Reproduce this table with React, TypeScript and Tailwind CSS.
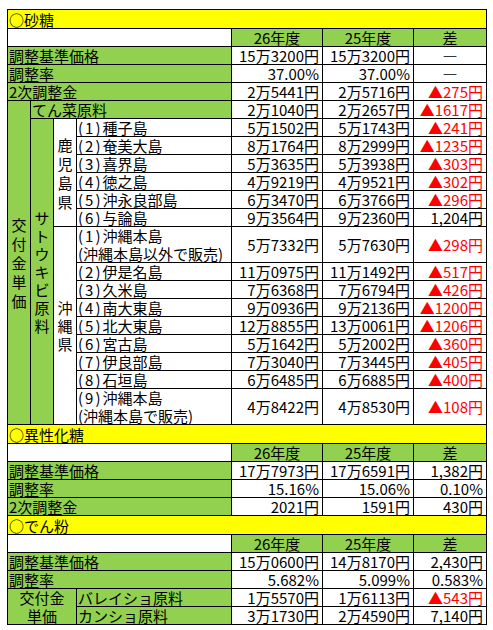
import React from "react";

// 砂糖・異性化糖・でん粉の調整金/交付金単価の比較表（Excel風）

const GREEN = "bg-[#92d050]";
const YELLOW = "bg-[#ffff00]";

type Row = { name: string; y26: string; y25: string; diff: string; red?: boolean };

const kagoshima: Row[] = [
  { name: "(1)種子島", y26: "5万1502円", y25: "5万1743円", diff: "▲241円", red: true },
  { name: "(2)奄美大島", y26: "8万1764円", y25: "8万2999円", diff: "▲1235円", red: true },
  { name: "(3)喜界島", y26: "5万3635円", y25: "5万3938円", diff: "▲303円", red: true },
  { name: "(4)徳之島", y26: "4万9219円", y25: "4万9521円", diff: "▲302円", red: true },
  { name: "(5)沖永良部島", y26: "6万3470円", y25: "6万3766円", diff: "▲296円", red: true },
  { name: "(6)与論島", y26: "9万3564円", y25: "9万2360円", diff: "1,204円" },
];

const okinawa: Row[] = [
  { name: "(2)伊是名島", y26: "11万0975円", y25: "11万1492円", diff: "▲517円", red: true },
  { name: "(3)久米島", y26: "7万6368円", y25: "7万6794円", diff: "▲426円", red: true },
  { name: "(4)南大東島", y26: "9万0936円", y25: "9万2136円", diff: "▲1200円", red: true },
  { name: "(5)北大東島", y26: "12万8855円", y25: "13万0061円", diff: "▲1206円", red: true },
  { name: "(6)宮古島", y26: "5万1642円", y25: "5万2002円", diff: "▲360円", red: true },
  { name: "(7)伊良部島", y26: "7万3040円", y25: "7万3445円", diff: "▲405円", red: true },
  { name: "(8)石垣島", y26: "6万6485円", y25: "6万6885円", diff: "▲400円", red: true },
];

const Title = ({ children }: { children: React.ReactNode }) => (
  <div className={`col-span-7 ${YELLOW} flex items-center pl-px`}>{children}</div>
);

const HeaderRow = () => (
  <>
    <div className="col-span-4 bg-white" />
    <div className={`${GREEN} flex items-center justify-center`}>26年度</div>
    <div className={`${GREEN} flex items-center justify-center`}>25年度</div>
    <div className={`${GREEN} flex items-center justify-center`}>差</div>
  </>
);

const Label = ({ children, span = "col-span-4" }: { children: React.ReactNode; span?: string }) => (
  <div className={`${span} ${GREEN} flex items-center whitespace-nowrap pl-px`}>{children}</div>
);

// "(1)種子島" -> 番号部分だけ字間を広げる
const Island = ({ text }: { text: string }) => {
  const m = text.match(/^(\(\d\))(.*)$/);
  if (!m) return <span>{text}</span>;
  return (
    <span>
      <span className="tracking-[2px]">{m[1]}</span>
      {m[2]}
    </span>
  );
};

const Name = ({ children }: { children: React.ReactNode }) => (
  <div className="flex flex-col justify-center whitespace-nowrap bg-white pl-px leading-[18px]">
    {children}
  </div>
);

const Num = ({ children, red }: { children: React.ReactNode; red?: boolean }) => (
  <div
    className={`flex items-center justify-end whitespace-nowrap bg-white pr-[3px] ${
      red ? "text-[#ff0000]" : ""
    }`}
  >
    {children}
  </div>
);

const Dash = () => <div className="flex items-center justify-center bg-white">―</div>;

const VText = ({ text, lh }: { text: string; lh: string }) => (
  <div className="flex flex-col items-center">
    {[...text].map((c, i) => (
      <span key={i} className={lh}>
        {c}
      </span>
    ))}
  </div>
);

const Values = ({ r }: { r: Row }) => (
  <>
    <Num>{r.y26}</Num>
    <Num>{r.y25}</Num>
    <Num red={r.red}>{r.diff}</Num>
  </>
);

export default function App() {
  return (
    <div className="min-h-screen bg-white font-['Noto_Sans_CJK_JP','Noto_Sans',sans-serif] text-[15px] leading-[17px] text-black">
      <div className="ml-[7px] mt-[9px] grid w-fit grid-cols-[22px_22px_22px_154px_90px_90px_72px] grid-rows-[18px_repeat(11,17px)_35px_repeat(7,17px)_35px_18px_repeat(4,17px)_18px_repeat(5,17px)] gap-px bg-black p-px">
        {/* 砂糖 */}
        <Title>○砂糖</Title>
        <HeaderRow />
        <Label>調整基準価格</Label>
        <Num>15万3200円</Num>
        <Num>15万3200円</Num>
        <Dash />
        <Label>調整率</Label>
        <Num>37.00%</Num>
        <Num>37.00%</Num>
        <Dash />
        <Label>2次調整金</Label>
        <Num>2万5441円</Num>
        <Num>2万5716円</Num>
        <Num red>▲275円</Num>

        <div className={`row-span-16 ${GREEN} flex items-center justify-center`}>
          <VText text="交付金単価" lh="leading-[19px]" />
        </div>
        <Label span="col-span-3">てん菜原料</Label>
        <Num>2万1040円</Num>
        <Num>2万2657円</Num>
        <Num red>▲1617円</Num>

        <div className={`row-span-15 ${GREEN} flex items-center justify-center`}>
          <VText text="サトウキビ原料" lh="leading-[18px]" />
        </div>
        <div className="row-span-6 flex items-center justify-center bg-white">
          <VText text="鹿児島県" lh="leading-[19px]" />
        </div>
        {kagoshima.map((r) => (
          <React.Fragment key={r.name}>
            <Name>
              <Island text={r.name} />
            </Name>
            <Values r={r} />
          </React.Fragment>
        ))}

        <div className="row-span-9 flex items-center justify-center bg-white">
          <VText text="沖縄県" lh="leading-[18px]" />
        </div>
        <Name>
          <Island text="(1)沖縄本島" />
          <span>(沖縄本島以外で販売)</span>
        </Name>
        <Num>5万7332円</Num>
        <Num>5万7630円</Num>
        <Num red>▲298円</Num>
        {okinawa.map((r) => (
          <React.Fragment key={r.name}>
            <Name>
              <Island text={r.name} />
            </Name>
            <Values r={r} />
          </React.Fragment>
        ))}
        <Name>
          <Island text="(9)沖縄本島" />
          <span>(沖縄本島で販売)</span>
        </Name>
        <Num>4万8422円</Num>
        <Num>4万8530円</Num>
        <Num red>▲108円</Num>

        {/* 異性化糖 */}
        <Title>○異性化糖</Title>
        <HeaderRow />
        <Label>調整基準価格</Label>
        <Num>17万7973円</Num>
        <Num>17万6591円</Num>
        <Num>1,382円</Num>
        <Label>調整率</Label>
        <Num>15.16%</Num>
        <Num>15.06%</Num>
        <Num>0.10%</Num>
        <Label>2次調整金</Label>
        <Num>2021円</Num>
        <Num>1591円</Num>
        <Num>430円</Num>

        {/* でん粉 */}
        <Title>○でん粉</Title>
        <HeaderRow />
        <Label>調整基準価格</Label>
        <Num>15万0600円</Num>
        <Num>14万8170円</Num>
        <Num>2,430円</Num>
        <Label>調整率</Label>
        <Num>5.682%</Num>
        <Num>5.099%</Num>
        <Num>0.583%</Num>
        <div className={`col-span-3 row-span-2 ${GREEN} flex flex-col items-center justify-center leading-[18px]`}>
          <span>交付金</span>
          <span>単価</span>
        </div>
        <Label span="">バレイショ原料</Label>
        <Num>1万5570円</Num>
        <Num>1万6113円</Num>
        <Num red>▲543円</Num>
        <Label span="">カンショ原料</Label>
        <Num>3万1730円</Num>
        <Num>2万4590円</Num>
        <Num>7,140円</Num>
      </div>
    </div>
  );
}
